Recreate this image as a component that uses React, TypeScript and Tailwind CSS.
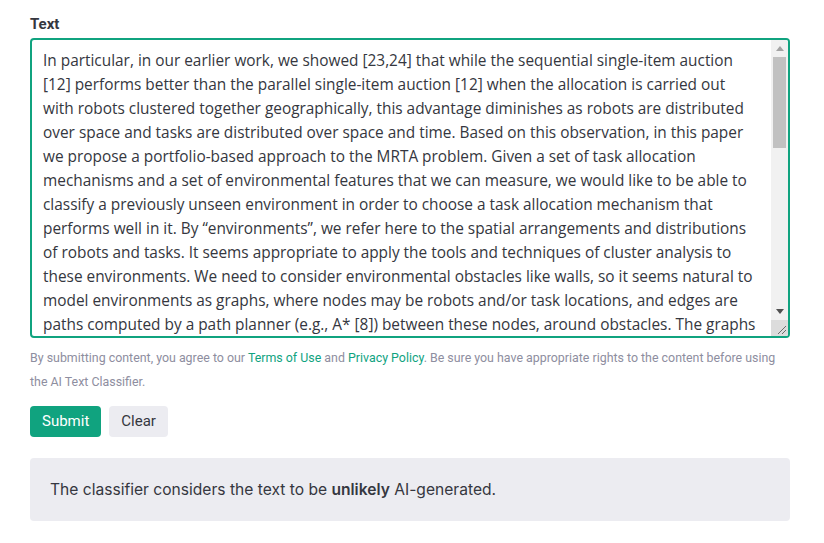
const SAMPLE =
  "In particular, in our earlier work, we showed [23,24] that while the sequential single-item auction [12] performs better than the parallel single-item auction [12] when the allocation is carried out with robots clustered together geographically, this advantage diminishes as robots are distributed over space and tasks are distributed over space and time. Based on this observation, in this paper we propose a portfolio-based approach to the MRTA problem. Given a set of task allocation mechanisms and a set of environmental features that we can measure, we would like to be able to classify a previously unseen environment in order to choose a task allocation mechanism that performs well in it. By \u201cenvironments\u201d, we refer here to the spatial arrangements and distributions of robots and tasks. It seems appropriate to apply the tools and techniques of cluster analysis to these environments. We need to consider environmental obstacles like walls, so it seems natural to model environments as graphs, where nodes may be robots and/or task locations, and edges are paths computed by a path planner (e.g., A* [8]) between these nodes, around obstacles. The graphs can then be analyzed with clustering techniques that group nodes according to their travel distances, and features of the resulting clusters can be used to characterize each environment.";

function Scrollbar() {
  return (
    <div className="flex w-[17px] shrink-0 flex-col bg-[#f1f1f1]">
      <div className="flex h-[17px] items-center justify-center">
        <svg width="8" height="5" viewBox="0 0 8 5">
          <path d="M0 5 L4 0 L8 5 Z" fill="#a3a3a3" />
        </svg>
      </div>
      <div className="mx-[2px] h-[91px] bg-[#c1c1c1]" />
      <div className="flex-1" />
      <div className="flex h-[17px] items-center justify-center">
        <svg width="8" height="5" viewBox="0 0 8 5">
          <path d="M0 0 L8 0 L4 5 Z" fill="#505050" />
        </svg>
      </div>
      <div className="relative h-[16px] bg-[#dcdcdc]">
        <svg className="absolute bottom-[1px] right-[1px]" width="10" height="10" viewBox="0 0 10 10">
          <path d="M1 9 L9 1 M5 9 L9 5" stroke="#6b6b6b" strokeWidth="1" />
        </svg>
      </div>
    </div>
  );
}

export default function App() {
  return (
    <div className="min-h-screen bg-white px-[30px] pt-[14px] font-['Roboto',sans-serif]">
      <div className="w-[760px]">
        <label className="mb-[4px] block text-[15px] font-bold leading-[20px] text-[#353740]">
          Text
        </label>
        <div className="flex h-[300px] overflow-hidden rounded-[4px] border-2 border-[#10a37f]">
          <textarea
            defaultValue={SAMPLE}
            className="block h-full flex-1 resize-none overflow-hidden pt-[9px] pb-[10px] pl-[11px] pr-[12px] font-['Open_Sans',sans-serif] text-[15.4px] leading-[24px] text-[#353740] outline-none"
          />
          <Scrollbar />
        </div>
        <p className="mt-[8px] text-[12.4px] leading-[24px] text-[#8e8ea0]">
          By submitting content, you agree to our <span className="text-[#10a37f]">Terms of Use</span> and{" "}
          <span className="text-[#10a37f]">Privacy Policy</span>. Be sure you have appropriate rights to the content before
          using the AI Text Classifier.
        </p>
        <div className="mt-[12px] flex gap-2">
          <button className="h-[31px] rounded-[4px] bg-[#10a37f] px-3 text-[15px] text-white">Submit</button>
          <button className="h-[31px] rounded-[4px] bg-[#ececf1] px-3 text-[15px] text-[#353740]">Clear</button>
        </div>
        <div className="mt-[21px] rounded-[4px] bg-[#ececf1] px-[20px] py-[19px] font-['Inter',sans-serif] text-[15.6px] leading-[25px] text-[#353740]">
          The classifier considers the text to be <b className="font-semibold">unlikely</b> AI-generated.
        </div>
      </div>
    </div>
  );
}
